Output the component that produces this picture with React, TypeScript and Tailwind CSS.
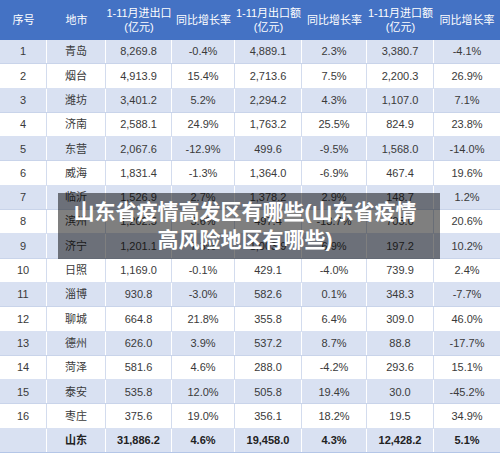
const headers = [
  ["序号"],
  ["地市"],
  ["1-11月进出口", "(亿元)"],
  ["同比增长率"],
  ["1-11月出口额", "(亿元)"],
  ["同比增长率"],
  ["1-11月进口额", "(亿元)"],
  ["同比增长率"],
]

const rows = [
  ["1", "青岛", "8,269.8", "-0.4%", "4,889.1", "2.3%", "3,380.7", "-4.1%"],
  ["2", "烟台", "4,913.9", "15.4%", "2,713.6", "7.5%", "2,200.3", "26.9%"],
  ["3", "潍坊", "3,401.2", "5.2%", "2,294.2", "4.3%", "1,107.0", "7.1%"],
  ["4", "济南", "2,588.1", "24.9%", "1,763.2", "25.5%", "824.9", "23.8%"],
  ["5", "东营", "2,067.6", "-12.9%", "499.6", "-9.5%", "1,568.0", "-14.0%"],
  ["6", "威海", "1,831.4", "-1.3%", "1,364.0", "-6.9%", "467.4", "19.6%"],
  ["7", "临沂", "1,526.9", "2.7%", "1,378.2", "2.9%", "148.7", "1.2%"],
  ["8", "滨州", "1,202.5", "3.6%", "497.4", "-13.7%", "705.0", "20.6%"],
  ["9", "济宁", "1,201.1", "7.3%", "1,003.9", "6.9%", "197.2", "10.2%"],
  ["10", "日照", "1,169.0", "-0.1%", "429.1", "-4.0%", "739.9", "2.4%"],
  ["11", "淄博", "930.8", "-3.0%", "582.6", "0.1%", "348.3", "-7.7%"],
  ["12", "聊城", "664.8", "21.8%", "355.8", "6.4%", "309.0", "46.0%"],
  ["13", "德州", "626.0", "3.9%", "537.2", "8.7%", "88.8", "-17.7%"],
  ["14", "菏泽", "581.6", "4.6%", "288.0", "-4.2%", "293.6", "15.1%"],
  ["15", "泰安", "535.8", "12.0%", "505.8", "19.4%", "30.0", "-45.2%"],
  ["16", "枣庄", "375.6", "19.0%", "356.1", "18.2%", "19.5", "34.9%"],
]

const total = ["", "山东", "31,886.2", "4.6%", "19,458.0", "4.3%", "12,428.2", "5.1%"]

const cols = "grid grid-cols-[47px_59px_66px_63px_67px_65px_67px_66px]"

export default function App() {
  return (
    <div className="relative w-[500px] h-[453px] overflow-hidden bg-white font-['Liberation_Sans','Noto_Sans_CJK_SC',sans-serif] text-[11px] text-[#3a3a3a]">
      <div className="grid h-[453px] grid-rows-[40px_repeat(17,1fr)]">
        <div className={`${cols} bg-[#4472c4] text-white`}>
          {headers.map((h, i) => (
            <div key={i} className="flex flex-col items-center justify-center leading-[14px]">
              {h.map((t, j) => (
                <span key={j}>{t}</span>
              ))}
            </div>
          ))}
        </div>
        {rows.map((r, i) => {
          const blue = i % 2 === 0
          return (
            <div
              key={i}
              className={`${cols} ${blue ? "bg-[#d9e1f2]" : "bg-white"} border-b ${blue ? "border-[#c9d4ea]" : "border-[#d9e1f2]"}`}
            >
              {r.map((c, j) => (
                <div
                  key={j}
                  className={`flex items-center justify-center ${j < 7 ? "border-r" : ""} ${blue ? "border-white" : "border-[#d3dcee]"}`}
                >
                  {c}
                </div>
              ))}
            </div>
          )
        })}
        <div className={`${cols} bg-[#d9e1f2] border-b border-[#b4c6e7] font-bold text-[#222]`}>
          {total.map((c, j) => (
            <div key={j} className={`flex items-center justify-center ${j < 7 ? "border-r border-white" : ""}`}>
              {c}
            </div>
          ))}
        </div>
      </div>
      {/* title banner laid over the table */}
      <div className="absolute left-[58px] top-[193px] flex h-[66px] w-[382px] flex-col items-center justify-center bg-black/50 pr-[8px] text-center text-[21px] font-bold leading-[28px] text-white">
        <span>山东省疫情高发区有哪些(山东省疫情</span>
        <span>高风险地区有哪些)</span>
      </div>
    </div>
  )
}
